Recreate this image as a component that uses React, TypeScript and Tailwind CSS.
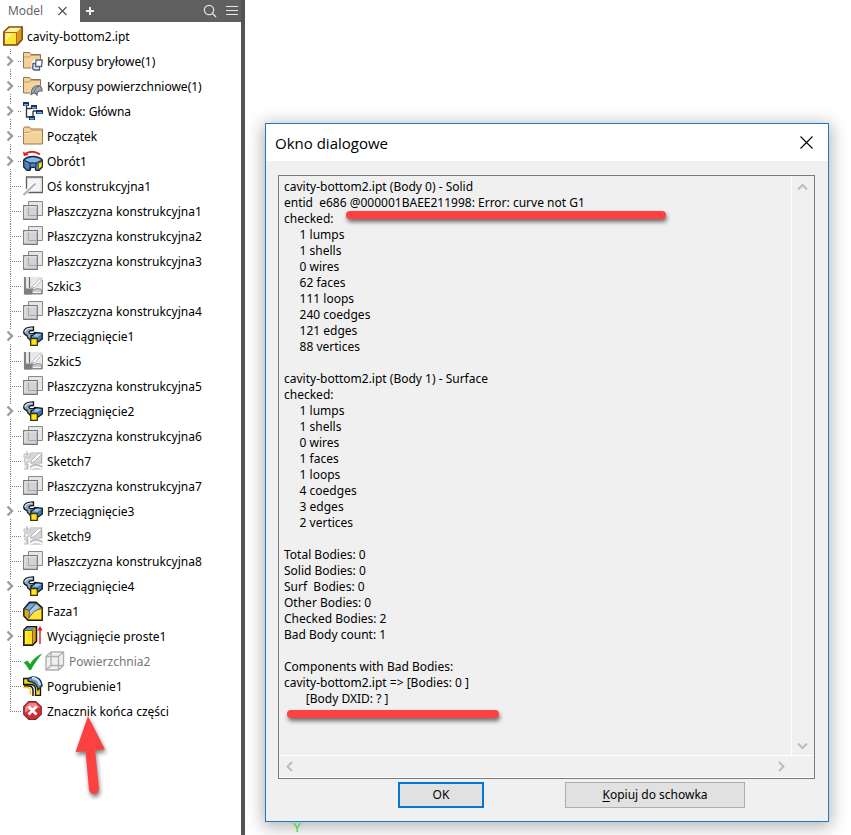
import type { ReactNode } from "react";

type IconName =
  | "solids"
  | "surfaces"
  | "view"
  | "folder"
  | "revolve"
  | "axis"
  | "plane"
  | "sketch"
  | "sketchShared"
  | "sweep"
  | "chamfer"
  | "extrude"
  | "surface"
  | "thicken"
  | "end";

type Node = { label: string; icon: IconName; expandable?: boolean; muted?: boolean };

const nodes: Node[] = [
  { label: "Korpusy bryłowe(1)", icon: "solids", expandable: true },
  { label: "Korpusy powierzchniowe(1)", icon: "surfaces", expandable: true },
  { label: "Widok: Główna", icon: "view", expandable: true },
  { label: "Początek", icon: "folder", expandable: true },
  { label: "Obrót1", icon: "revolve", expandable: true },
  { label: "Oś konstrukcyjna1", icon: "axis" },
  { label: "Płaszczyzna konstrukcyjna1", icon: "plane" },
  { label: "Płaszczyzna konstrukcyjna2", icon: "plane" },
  { label: "Płaszczyzna konstrukcyjna3", icon: "plane" },
  { label: "Szkic3", icon: "sketch" },
  { label: "Płaszczyzna konstrukcyjna4", icon: "plane" },
  { label: "Przeciągnięcie1", icon: "sweep", expandable: true },
  { label: "Szkic5", icon: "sketch" },
  { label: "Płaszczyzna konstrukcyjna5", icon: "plane" },
  { label: "Przeciągnięcie2", icon: "sweep", expandable: true },
  { label: "Płaszczyzna konstrukcyjna6", icon: "plane" },
  { label: "Sketch7", icon: "sketchShared" },
  { label: "Płaszczyzna konstrukcyjna7", icon: "plane" },
  { label: "Przeciągnięcie3", icon: "sweep", expandable: true },
  { label: "Sketch9", icon: "sketchShared" },
  { label: "Płaszczyzna konstrukcyjna8", icon: "plane" },
  { label: "Przeciągnięcie4", icon: "sweep", expandable: true },
  { label: "Faza1", icon: "chamfer" },
  { label: "Wyciągnięcie proste1", icon: "extrude", expandable: true },
  { label: "Powierzchnia2", icon: "surface", muted: true },
  { label: "Pogrubienie1", icon: "thicken" },
  { label: "Znacznik końca części", icon: "end" },
];

const report = `cavity-bottom2.ipt (Body 0) - Solid
entid  e686 @000001BAEE211998: Error: curve not G1
checked:
     1 lumps
     1 shells
     0 wires
     62 faces
     111 loops
     240 coedges
     121 edges
     88 vertices

cavity-bottom2.ipt (Body 1) - Surface
checked:
     1 lumps
     1 shells
     0 wires
     1 faces
     1 loops
     4 coedges
     3 edges
     2 vertices

Total Bodies: 0
Solid Bodies: 0
Surf  Bodies: 0
Other Bodies: 0
Checked Bodies: 2
Bad Body count: 1

Components with Bad Bodies:
cavity-bottom2.ipt => [Bodies: 0 ]
       [Body DXID: ? ]`;

const folderShape = (
  <path d="M.5 1.500h6l1.500 2h9.500v13.500H.5z" fill="#f4d29a" stroke="#8d7656" />
);

const icons: Record<IconName, ReactNode> = {
  solids: (
    <>
      {folderShape}
      <path d="M1 6h5l2-1.500h9" fill="none" stroke="#c79f62" />
      <path d="M9 11l3-3h8v12H8z" fill="#fff" />
      <path d="M10 12.500h6.500v6.500H11l-1.500-1.500z" fill="#dfe4ec" stroke="#53617a" strokeWidth="1.300" />
      <path d="M13 9h6.200l-.7 6.500h-6z" fill="#fff" stroke="#53617a" strokeWidth="1.300" />
    </>
  ),
  surfaces: (
    <>
      {folderShape}
      <path d="M1 6h5l2-1.500h9" fill="none" stroke="#c79f62" />
      <path d="M7 19.500c0-7 3-11 9-11l4 3.500v8z" fill="#fff" />
      <path d="M8 18.500c0-5 2-9 8-9 2 1 3 3 3 5.500h-2c-2 0-3 2-3 4l-2.500-2.500z" fill="#a5a9ae" stroke="#60656d" strokeWidth="1.200" />
      <path d="M16 10c-3 1-4.500 4-4.500 7" fill="none" stroke="#6b7078" />
    </>
  ),
  view: (
    <>
      <path d="M3.500 3v13H7M3.500 7.500h5M10 10h10M10 10v6" fill="none" stroke="#333" strokeWidth="1.300" />
      <path d="M0 1h6v4H0zM8 4h6v4H8zM13 9h7v4h-7zM6 15h6v4H6z" fill="#17345e" />
      <path d="M1 3h4v1.500H1zM9 6h4v1.500H9zM14 11h5v1.500h-5zM7 17h4v1.500H7z" fill="#67b4ec" />
    </>
  ),
  folder: (
    <>
      <path d="M.5 2.500L1.500 1h5l1.500 2h11.500v15H.5z" fill="#f2d19b" stroke="#9a7b4a" />
      <path d="M1 6.500h5.500l1.500-1.500h11" fill="none" stroke="#c89f61" />
      <path d="M1.500 7.500h5.500L8.500 6h10" fill="none" stroke="#ffe8bf" />
    </>
  ),
  revolve: (
    <>
      <path d="M2 3C6 0 13 0 17 3.500" fill="none" stroke="#e21a1f" strokeWidth="1.800" />
      <path d="M0 .5L.8 5l5-1z" fill="#e21a1f" />
      <path d="M.7 9C3 6.500 6 5.500 10 5.500s7 1 9.300 3.500v7L16 19.300h-3l-1-3H8l-1 3H4L.7 16z" fill="#4c84bf" stroke="#172538" strokeWidth="1.300" />
      <path d="M2 9c4-3.500 12-3.500 16 0l-5 2.500H7z" fill="#8ab8e4" />
      <path d="M1.500 9.500L7 12v4l-1 2.500M18.500 9.500L13 12v4M7 12h6" fill="none" stroke="#172538" />
      <path d="M15.500 12.500l3.500-2v5l-3.500 3z" fill="#ffe714" stroke="#40360a" strokeWidth=".6" />
    </>
  ),
  axis: (
    <>
      <path d="M3.500 1h16v15.500H3.500z" fill="#f4f4f4" stroke="#5b5d60" strokeWidth="1.300" />
      <path d="M5 2.500h13v12.500" fill="none" stroke="#ddd" />
      <path d="M0 19L12 7.500" stroke="#fff" strokeWidth="4" />
      <path d="M.5 19L12.500 7.500" stroke="#b3b3b3" strokeWidth="2" />
    </>
  ),
  plane: (
    <>
      <path d="M5.500.5h14v14h-14z" fill="#e6e6e6" stroke="#8a8a8a" />
      <path d="M.7 4.700h13.600v13.600H.7z" fill="#d3d3d3" stroke="#777" strokeWidth="1.200" />
      <path d="M5.500 5v9.500H14" fill="none" stroke="#a8a8a8" />
      <path d="M1.800 17V5.800H14" fill="none" stroke="#ececec" />
    </>
  ),
  sketch: (
    <>
      <path d="M.5 1h19v18H.5z" fill="#e8e8e8" />
      <path d="M2 1v16.500h17" fill="none" stroke="#686868" strokeWidth="1.600" />
      <path d="M6.500 1v11" stroke="#6d6d6d" strokeWidth="1.200" />
      <path d="M1.500 12.500h9l-2 6h-7z" fill="#7f7f7f" />
      <path d="M8 12l9-9.500 2 1-7 8z" fill="#fff" stroke="#aaa" strokeWidth=".8" />
      <path d="M9 14.500l5-2 4.500.8v4H9z" fill="#c9c9c9" stroke="#8b8b8b" strokeWidth=".8" />
      <path d="M10 16.500h8" stroke="#f5f5f5" />
      <path d="M19.500 4v14" stroke="#999" />
    </>
  ),
  sketchShared: (
    <>
      <path d="M7 1h12.500v18H7z" fill="#d6d6d6" />
      <path d="M1 3h6v3H1zM2 7h4v4H1zM1 13h4v5H1" fill="#eee" stroke="#bcbcbc" />
      <path d="M4 0v5M4 11v7" stroke="#b0b0b0" />
      <path d="M8 10l8-8 3 1-7 7-4 2z" fill="#fff" stroke="#bababa" />
      <path d="M7 15c2-4 9-4 12-1M8 18c3-3 8-3 11 0" fill="none" stroke="#fff" strokeWidth="1.600" />
      <path d="M7 16c3-3 7-3 12 0M8 12h10" fill="none" stroke="#a5a5a5" />
      <path d="M18.500 4v8" stroke="#b0b0b0" />
    </>
  ),
  sweep: (
    <>
      <path d="M7 10l5-3.500 7.300.8V13L15 16H8l-1-2z" fill="#3f78b5" stroke="#101820" strokeWidth="1.300" />
      <path d="M8 10l4-2.500 6.500.6L14.500 11z" fill="#9cc4ea" />
      <path d="M10.500.8C4.500.8.7 3 .7 6.300c0 1.700 1.500 2.700 3.300 3.200 0 2 1.500 3.500 4 4.500v-4c2-.5 3.500-1.500 4.500-3-3 1-6.500 1-6.500-.6 0-1.200 2-1.900 4.500-1.900z" fill="#8ea9c2" stroke="#101820" strokeWidth="1.300" />
      <path d="M9.500 2C5 2.200 2 4 2 6" fill="none" stroke="#e8f1f8" strokeWidth="1.200" />
      <path d="M7.700 12.700h6.600v6.600H7.700z" fill="#ffe813" stroke="#3d350a" strokeWidth="1.300" />
    </>
  ),
  chamfer: (
    <>
      <path d="M.8 8L6.500 1.200h6.500l6.200 5.300v12.700H5L.8 15z" fill="#e0a916" stroke="#19160c" strokeWidth="1.400" />
      <path d="M1.500 8L7 2h6L6.500 9.500z" fill="#78a8db" stroke="#203958" strokeWidth=".8" />
      <path d="M6 18.500c0-6 4-11 12.500-10.500v10.500z" fill="#ffe33c" stroke="#8a6f12" strokeWidth=".7" />
      <path d="M6.500 9.500L13 2.500l5 4.500-7 3.500-5 6z" fill="#a8cbea" stroke="#203958" strokeWidth=".7" />
    </>
  ),
  extrude: (
    <>
      <path d="M.8 4L4 .8h9.500v14.500l-4 4H.8z" fill="#d89d12" stroke="#1b180e" strokeWidth="1.500" />
      <path d="M1.500 4L4.500 1.500h8L9.500 4z" fill="#5f98ce" />
      <path d="M1.500 4.500h8v14h-8z" fill="#ffe11d" stroke="#4b3e0d" strokeWidth=".7" />
      <path d="M3 5v13" stroke="#fff176" />
      <path d="M17 18V4" stroke="#e2151a" strokeWidth="1.400" />
      <path d="M17 0l-2.500 4.500h5z" fill="#e2151a" />
    </>
  ),
  surface: (
    <>
      <path d="M1 5.500L6 1h12.500v13.500l-5 4.500H1z" fill="#f0f0f0" stroke="#b0b0b0" strokeWidth="1.400" />
      <path d="M1 5.500h12.500V19M13.500 5.500l5-4.500M6 1v13.500h12.500M6 14.500L1 19" fill="none" stroke="#b0b0b0" strokeWidth="1.400" />
    </>
  ),
  thicken: (
    <>
      <path d="M.5 2.500h8c5 0 9 4 9 10v7h-5v-6c0-3-2-5-5-5h-7z" fill="#f4d11c" stroke="#17150b" strokeWidth="1.300" />
      <path d="M5 2.500L9.500.8c5 0 9 3 9.700 8.700L15 14c-1-5-3-8-10-9z" fill="#638fbb" stroke="#16283a" strokeWidth="1.300" />
      <path d="M9 2c4 0 7 3 8 7" fill="none" stroke="#c4daef" strokeWidth="2.500" />
      <path d="M1 10h5c3 0 4 2 4 5v5" fill="none" stroke="#17150b" strokeWidth="1.500" />
      <path d="M0 11.500h5c2 0 3 1.500 3 3.500v4.500H3c0-3-1-4.500-3-4.500z" fill="#fff" />
      <path d="M0 11.500h4c2.500 0 3.500 1.500 3.500 3.500v4" fill="none" stroke="#f4d11c" strokeWidth="1.500" />
    </>
  ),
  end: (
    <>
      <path d="M5.700.7h7l5.600 5.100v7.400l-5.600 5.100h-7L.7 13.200V5.800z" fill="#d62a35" stroke="#7c3036" strokeWidth="1.200" />
      <path d="M6 2h6.500L17 6.500C13 7 6 8 2 12V6z" fill="#f0828a" />
      <path d="M5.500 5.500l8 8M13.500 5.500l-8 8" stroke="#fff" strokeWidth="2.800" />
    </>
  ),
};

function Icon({ name }: { name: IconName }) {
  return (
    <svg className="mb-px h-5 w-5 shrink-0" viewBox="0 0 20 20" aria-hidden="true">
      {icons[name]}
    </svg>
  );
}

function Connector({ expandable, last }: { expandable?: boolean; last: boolean }) {
  const lines = (
    <svg className="h-[25px] w-[23px]" viewBox="0 0 23 25" aria-hidden="true">
      <g fill="none" stroke="#808080" strokeDasharray="1 1">
        {expandable ? (
          <path d="M10.500 0v5M10.500 20v5M18 12.500h4" />
        ) : (
          <path d={last ? "M10.500 0v13M12 12.500h10" : "M10.500 0v25M12 12.500h10"} />
        )}
      </g>
      {expandable && (
        <path d="M7.500 7.500l4.500 4.500-4.500 4.500" fill="none" stroke="#9c9c9c" strokeWidth="2.400" />
      )}
    </svg>
  );
  return expandable ? (
    <button type="button" aria-label="Rozwiń" className="shrink-0">
      {lines}
    </button>
  ) : (
    <span className="shrink-0">{lines}</span>
  );
}

function Sidebar() {
  return (
    <aside className="relative w-[245px] shrink-0 border-r-4 border-[#545454] bg-white">
      <div className="flex h-[22px] bg-[#5f5f5f] font-['Open_Sans','Noto_Sans',sans-serif]">
        <div className="flex w-20 items-center justify-between bg-white pr-3 pl-2">
          <span className="text-[12px] leading-5 text-[#5c5c5c]">Model</span>
          <button type="button" aria-label="Zamknij kartę">
            <svg className="h-[10px] w-[11px]" viewBox="0 0 11 10" aria-hidden="true">
              <path d="M1.500 1l8 8M9.500 1l-8 8" stroke="#555" strokeWidth="1.200" />
            </svg>
          </button>
        </div>
        <button type="button" aria-label="Dodaj kartę" className="px-[5px]">
          <svg className="h-[10px] w-[10px]" viewBox="0 0 10 10" aria-hidden="true">
            <path d="M5 1v8M1 5h8" stroke="#eee" strokeWidth="2" />
          </svg>
        </button>
        <div className="ml-auto flex items-center gap-2 pr-[2px]">
          <button type="button" aria-label="Szukaj">
            <svg className="h-[14px] w-[14px]" viewBox="0 0 14 14" aria-hidden="true">
              <circle cx="6" cy="6" r="4.700" fill="none" stroke="#e2e2e2" strokeWidth="1.200" />
              <path d="M9.500 9.500l3.500 3.500" stroke="#e2e2e2" strokeWidth="1.400" />
            </svg>
          </button>
          <button type="button" aria-label="Menu">
            <svg className="h-3 w-[14px]" viewBox="0 0 14 12" aria-hidden="true">
              <path d="M1 1.500h12M1 5.500h12M1 9.500h12" stroke="#e8e8e8" />
            </svg>
          </button>
        </div>
      </div>

      <div className="mt-[2px] flex h-[25px] items-center gap-1 pl-[3px]">
        <svg className="mb-px h-5 w-5" viewBox="0 0 20 20" aria-hidden="true">
          <path d="M.8 6L6 1h13.200v12.500l-5 5.500H.8z" fill="#d99a12" stroke="#7b3d0c" strokeWidth="1.400" />
          <path d="M1.700 6L6.500 1.800h11.500L14 6z" fill="#fff2a0" />
          <path d="M1.500 6.500h12v12h-12z" fill="#ffe338" stroke="#8d5710" strokeWidth=".8" />
          <path d="M2.500 7.500h7l-7 8z" fill="#fff28b" />
        </svg>
        <span>cavity-bottom2.ipt</span>
      </div>
      <ul>
        {nodes.map((node, i) => (
          <li key={node.label} className="flex h-[25px] items-center whitespace-nowrap">
            <Connector expandable={node.expandable} last={i === nodes.length - 1} />
            {node.muted && (
              <svg className="mr-[2px] h-5 w-5 shrink-0" viewBox="0 0 20 20" aria-hidden="true">
                <path d="M.5 10.500l4-2L7 12C10 7 14 3.500 19.500 1.500 15 6.500 11 12 8 18H6C4.500 15 3 12.500.5 10.500z" fill="#19a52c" />
              </svg>
            )}
            <Icon name={node.icon} />
            <span className={node.muted ? "ml-1 text-[#777]" : "ml-1"}>{node.label}</span>
          </li>
        ))}
      </ul>

      <svg
        className="absolute top-[710px] left-[68px] h-[95px] w-[48px] drop-shadow-[1px_3px_2px_rgba(0,0,0,0.5)]"
        viewBox="0 0 48 95"
        aria-hidden="true"
      >
        <path d="M20 6L37 39.500l-10 .8 4 38.200a5 5 0 0 1-10 1L17.500 41.200 7.500 42z" fill="#fd4141" />
      </svg>
    </aside>
  );
}

function ScrollButton({ label, path }: { label: string; path: string }) {
  return (
    <button type="button" disabled aria-label={label}>
      <svg className="h-[11px] w-[11px]" viewBox="0 0 11 11" aria-hidden="true">
        <path d={path} fill="none" stroke="#bcbcbc" strokeWidth="2" />
      </svg>
    </button>
  );
}

function Dialog() {
  return (
    <section
      role="dialog"
      aria-labelledby="dialog-title"
      className="border border-[#1979ca] bg-[#f0f0f0] shadow-[0_3px_16px_2px_rgba(0,0,0,0.3)]"
    >
      <header className="flex h-[37px] items-center justify-between bg-white pr-[15px] pl-[9px]">
        <h1
          id="dialog-title"
          className="font-['Open_Sans','Noto_Sans',sans-serif] text-[15px] leading-5"
        >
          Okno dialogowe
        </h1>
        <button type="button" aria-label="Zamknij">
          <svg className="h-[13px] w-[13px]" viewBox="0 0 13 13" aria-hidden="true">
            <path d="M.5.5l12 12M12.500.5l-12 12" stroke="#000" strokeWidth="1.100" />
          </svg>
        </button>
      </header>

      <div className="px-[13px] pt-[14px] pb-[13px] pl-3">
        <div className="relative border border-[#7a7a7a]">
          <div className="flex">
            <textarea
              readOnly
              wrap="off"
              rows={36}
              aria-label="Raport"
              value={report}
              className="block min-w-0 flex-1 resize-none overflow-hidden pt-[3px] pl-[5px] leading-4 outline-none"
            />
            <div className="flex w-[23px] flex-col items-center justify-between border-l border-white pt-[6px] pr-[2px] pb-1">
              <ScrollButton label="W górę" path="M1 7.500L5.500 3 10 7.500" />
              <ScrollButton label="W dół" path="M1 3.500L5.500 8 10 3.500" />
            </div>
          </div>
          <div className="flex h-[23px] items-center justify-between border-y border-white pr-[27px] pl-[5px]">
            <ScrollButton label="W lewo" path="M8 1L3.500 5.500 8 10" />
            <ScrollButton label="W prawo" path="M3 1l4.500 4.500L3 10" />
          </div>
          <div className="absolute top-[35px] left-[67px] h-2 w-80 rounded-full bg-[#fd4141] shadow-[1px_3px_4px_rgba(0,0,0,0.55)]" />
          <div className="absolute top-[534px] left-2 h-2 w-[212px] rounded-full bg-[#fd4141] shadow-[1px_3px_4px_rgba(0,0,0,0.55)]" />
        </div>

        <div className="mt-[3px] flex justify-between pr-[70px] pl-[120px]">
          <button type="button" className="h-[26px] w-[86px] border-2 border-[#0078d7] bg-[#e1e1e1]">
            OK
          </button>
          <button type="button" className="h-[26px] w-[180px] border border-[#adadad] bg-[#e1e1e1]">
            <span className="underline underline-offset-2">K</span>opiuj do schowka
          </button>
        </div>
      </div>
    </section>
  );
}

export default function App() {
  return (
    <div className="flex min-h-screen overflow-hidden bg-white font-['Noto_Sans','DejaVu_Sans_Condensed',sans-serif] text-[12px] leading-4 text-black">
      <Sidebar />
      <main className="min-w-0 flex-1 pt-[123px] pr-[22px] pl-5">
        <Dialog />
        <div className="pl-7 font-['Liberation_Sans',sans-serif] leading-[13px] text-[#22dd22]">
          Y
        </div>
      </main>
    </div>
  );
}
